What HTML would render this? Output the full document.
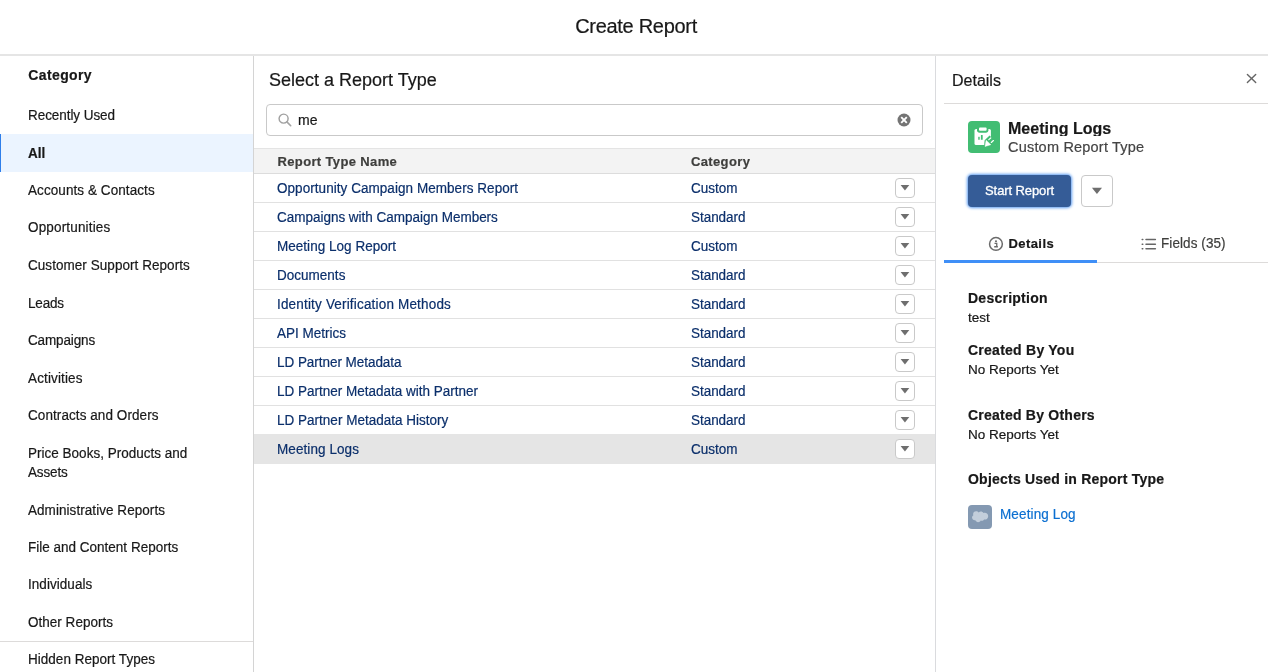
<!DOCTYPE html>
<html lang="en">
<head>
<meta charset="utf-8">
<title>Create Report</title>
<style>
*{box-sizing:border-box;margin:0;padding:0}
html,body{width:1268px;height:672px;overflow:hidden;background:#fff}
body{will-change:transform;-webkit-text-stroke:.2px;font-family:"Liberation Sans",Arial,sans-serif;font-size:13px;color:#181818;position:relative}
.abs{position:absolute}
.t{position:absolute;white-space:nowrap;line-height:1}
#hdr{left:0;top:0;width:1268px;height:56px;border-bottom:2px solid #e5e5e5;background:#fff}
#left{left:0;top:56px;width:254px;height:616px;border-right:1px solid #d4d4d4;background:#fff}
#center{left:254px;top:56px;width:682px;height:616px;border-right:1px solid #dadbde;background:#fff}
#right{left:936px;top:56px;width:332px;height:616px;background:#fff}
.nav{position:absolute;left:28.300px;white-space:nowrap;font-size:14px;line-height:20px;color:#181818;transform:scaleX(.9643);transform-origin:0 0}
#sel{left:0;top:134px;width:253px;height:38px;background:#ebf4ff;border-left:1px solid #2e7eea}
#hid{left:0;top:641px;width:253px;height:1px;background:#dddbda}
#search{left:266px;top:104px;width:657px;height:32px;border:1px solid #c9c9c9;border-radius:4px;background:#fff}
#thead{left:254px;top:148px;width:681px;height:26px;background:#f3f3f3;border-top:1px solid #e4e4e4;border-bottom:1px solid #dcdcdc}
.th{position:absolute;font-weight:bold;font-size:13px;color:#3e3e3c;line-height:1;white-space:nowrap}
.row{position:absolute;left:254px;width:681px;height:29px;border-bottom:1px solid #e1e1e1}
.row.sel{background:#e5e5e5;border-bottom:0;height:30px;margin-top:-1px;padding-top:1px}
.row .n{position:absolute;left:23.400px;top:7px;font-size:14px;line-height:1;color:#0b2f6b;white-space:nowrap;transform:scaleX(.9643);transform-origin:0 0}
.row .c{position:absolute;left:436.500px;top:7px;font-size:14px;line-height:1;color:#0b2f6b;white-space:nowrap;transform:scaleX(.9643);transform-origin:0 0}
.row .dd{position:absolute;left:641px;top:4px;width:20px;height:20px;border:1px solid #c9c9c9;border-radius:4px;background:#fff}
.row .dd svg{position:absolute;left:0;top:0}
.row.sel .n,.row.sel .c{top:8px}
.row.sel .dd{top:5px}
.h{font-size:14px;font-weight:bold;color:#181818}
.v{font-size:13.5px;color:#181818}
.sx{transform:scaleX(.9643);transform-origin:0 0}
</style>
</head>
<body>
<div id="hdr" class="abs"></div>
<div class="t" style="left:575.200px;top:16px;font-size:20px;letter-spacing:-0.3px;color:#181818">Create Report</div>

<div id="left" class="abs"></div>
<div id="center" class="abs"></div>
<div id="right" class="abs"></div>

<!-- left nav -->
<div id="sel" class="abs"></div>
<div class="nav" style="top:65px;font-weight:bold;font-size:14px;letter-spacing:.38px;transform:none">Category</div>
<div class="nav" style="top:105px;letter-spacing:-0.067px;">Recently Used</div>
<div class="nav" style="top:143px;font-weight:bold;">All</div>
<div class="nav" style="top:180px;letter-spacing:0.078px;">Accounts &amp; Contacts</div>
<div class="nav" style="top:217px;letter-spacing:0.167px;">Opportunities</div>
<div class="nav" style="top:255px;letter-spacing:0.052px;">Customer Support Reports</div>
<div class="nav" style="top:293px;letter-spacing:-0.200px;">Leads</div>
<div class="nav" style="top:330px;letter-spacing:-0.150px;">Campaigns</div>
<div class="nav" style="top:368px;letter-spacing:0.144px;">Activities</div>
<div class="nav" style="top:405px;letter-spacing:0.079px;">Contracts and Orders</div>
<div class="nav" style="top:443px;letter-spacing:0.012px;">Price Books, Products and</div>
<div class="nav" style="top:462px;letter-spacing:-0.140px;">Assets</div>
<div class="nav" style="top:500px;letter-spacing:0.057px;">Administrative Reports</div>
<div class="nav" style="top:537px;letter-spacing:0.004px;">File and Content Reports</div>
<div class="nav" style="top:574px;letter-spacing:0.050px;">Individuals</div>
<div class="nav" style="top:612px;letter-spacing:0.017px;">Other Reports</div>
<div class="nav" style="top:649px;letter-spacing:0.022px;">Hidden Report Types</div>
<div id="hid" class="abs"></div>

<!-- center -->
<div class="t" style="left:269px;top:71px;font-size:18px;color:#181818">Select a Report Type</div>
<div id="search" class="abs"></div>
<svg class="abs" style="left:277px;top:113px" width="16" height="16" viewBox="0 0 16 16"><circle cx="6.600" cy="5.600" r="4.500" fill="none" stroke="#a0a0a0" stroke-width="1.450"/><path d="M9.900 8.900L13.700 12.700" stroke="#a3a3a3" stroke-width="1.600" stroke-linecap="round"/></svg>
<div class="t" style="left:298px;top:113px;font-size:14px;color:#181818">me</div>
<svg class="abs" style="left:897px;top:113px" width="14" height="14" viewBox="0 0 14 14"><circle cx="7" cy="7" r="6.500" fill="#747474"/><path d="M4.200 4.200L9.800 9.800M9.800 4.200L4.200 9.800" stroke="#fff" stroke-width="1.900"/></svg>

<div id="thead" class="abs"></div>
<div class="th" style="left:277.500px;top:155px;letter-spacing:.36px">Report Type Name</div>
<div class="th" style="left:691px;top:155px;letter-spacing:.36px">Category</div>

<div class="row" style="top:174px"><span class="n" style="letter-spacing:0.053px;">Opportunity Campaign Members Report</span><span class="c" style="">Custom</span><span class="dd"><svg width="18" height="18" viewBox="0 0 18 18"><path d="M4.600 5.900h8.700l-4.350 5.600z" fill="#6e6e6e"/></svg></span></div>
<div class="row" style="top:203px"><span class="n" style="letter-spacing:-0.017px;">Campaigns with Campaign Members</span><span class="c" style="letter-spacing:-0.043px;">Standard</span><span class="dd"><svg width="18" height="18" viewBox="0 0 18 18"><path d="M4.600 5.900h8.700l-4.350 5.600z" fill="#6e6e6e"/></svg></span></div>
<div class="row" style="top:232px"><span class="n" style="letter-spacing:0.029px;">Meeting Log Report</span><span class="c" style="">Custom</span><span class="dd"><svg width="18" height="18" viewBox="0 0 18 18"><path d="M4.600 5.900h8.700l-4.350 5.600z" fill="#6e6e6e"/></svg></span></div>
<div class="row" style="top:261px"><span class="n" style="letter-spacing:0.013px;">Documents</span><span class="c" style="letter-spacing:-0.043px;">Standard</span><span class="dd"><svg width="18" height="18" viewBox="0 0 18 18"><path d="M4.600 5.900h8.700l-4.350 5.600z" fill="#6e6e6e"/></svg></span></div>
<div class="row" style="top:290px"><span class="n" style="letter-spacing:0.186px;">Identity Verification Methods</span><span class="c" style="letter-spacing:-0.043px;">Standard</span><span class="dd"><svg width="18" height="18" viewBox="0 0 18 18"><path d="M4.600 5.900h8.700l-4.350 5.600z" fill="#6e6e6e"/></svg></span></div>
<div class="row" style="top:319px"><span class="n" style="letter-spacing:0.010px;">API Metrics</span><span class="c" style="letter-spacing:-0.043px;">Standard</span><span class="dd"><svg width="18" height="18" viewBox="0 0 18 18"><path d="M4.600 5.900h8.700l-4.350 5.600z" fill="#6e6e6e"/></svg></span></div>
<div class="row" style="top:348px"><span class="n" style="letter-spacing:-0.044px;">LD Partner Metadata</span><span class="c" style="letter-spacing:-0.043px;">Standard</span><span class="dd"><svg width="18" height="18" viewBox="0 0 18 18"><path d="M4.600 5.900h8.700l-4.350 5.600z" fill="#6e6e6e"/></svg></span></div>
<div class="row" style="top:377px"><span class="n" style="">LD Partner Metadata with Partner</span><span class="c" style="letter-spacing:-0.043px;">Standard</span><span class="dd"><svg width="18" height="18" viewBox="0 0 18 18"><path d="M4.600 5.900h8.700l-4.350 5.600z" fill="#6e6e6e"/></svg></span></div>
<div class="row" style="top:406px"><span class="n" style="letter-spacing:0.012px;">LD Partner Metadata History</span><span class="c" style="letter-spacing:-0.043px;">Standard</span><span class="dd"><svg width="18" height="18" viewBox="0 0 18 18"><path d="M4.600 5.900h8.700l-4.350 5.600z" fill="#6e6e6e"/></svg></span></div>
<div class="row sel" style="top:435px"><span class="n" style="letter-spacing:0.082px;">Meeting Logs</span><span class="c" style="">Custom</span><span class="dd"><svg width="18" height="18" viewBox="0 0 18 18"><path d="M4.600 5.900h8.700l-4.350 5.600z" fill="#6e6e6e"/></svg></span></div>
<!-- right -->
<div class="t" style="left:952px;top:73px;font-size:16px;color:#181818">Details</div>
<svg class="abs" style="left:1245px;top:71.500px" width="13" height="13" viewBox="0 0 13 13"><path d="M2.400 2.400L10.700 10.600M10.700 2.400L2.400 10.600" stroke="#666" stroke-width="1.400" stroke-linecap="round"/></svg>
<div class="abs" style="left:944px;top:103px;width:324px;height:1px;background:#dddbda"></div>

<div class="abs" style="left:968px;top:121px;width:32px;height:32px;border-radius:4px;background:#42bd73"></div>
<svg class="abs" style="left:968px;top:121px" width="32" height="32" viewBox="0 0 32 32">
<rect x="6.500" y="7.900" width="16.400" height="16.100" rx="1.600" fill="#fff"/>
<path d="M9 7h11.400v2.200c0 1.400-1.100 2.500-2.500 2.500h-6.400c-1.400 0-2.500-1.100-2.500-2.500z" fill="#42bd73"/>
<rect x="11" y="6.500" width="7.600" height="3.200" rx="1" fill="#fff"/>
<rect x="10.250" y="15.800" width="1.450" height="3" rx=".3" fill="#42bd73"/>
<rect x="12.900" y="14" width="1.800" height="4.800" rx=".3" fill="#42bd73"/>
<path d="M16 26.500l.6-7.300 5-4.600 5.600 5.600-4 4.600z" fill="#42bd73"/>
<path d="M18.100 19.200l4.800 4.500-5.900 1.800z" fill="#fff" stroke="#fff" stroke-width=".4" stroke-linejoin="round"/>
<path d="M20.800 18.600l1.950-1.650M23.300 21.500l2.100-2" stroke="#fff" stroke-width="1.150" stroke-linecap="round"/>
</svg>
<div class="t" style="left:1008px;top:120px;font-size:16px;font-weight:bold;color:#181818;height:16px;overflow:hidden;line-height:17px">Meeting Logs</div>
<div class="t" style="left:1008px;top:140px;font-size:14.500px;letter-spacing:.2px;color:#444">Custom Report Type</div>

<div class="abs" style="left:968px;top:175px;width:103px;height:32px;border-radius:4px;background:#355c97;box-shadow:0 0 3px 1px #5b9bf0"></div>
<div class="t" style="left:968px;width:103px;text-align:center;top:184px;font-size:13px;letter-spacing:-.1px;-webkit-text-stroke:.3px;color:#fff">Start Report</div>
<div class="abs" style="left:1081px;top:175px;width:32px;height:32px;border-radius:4px;border:1px solid #c9c9c9;background:#fff"></div>
<svg class="abs" style="left:1081px;top:175px" width="32" height="32" viewBox="0 0 32 32"><path d="M10.900 12.800h10.100l-5.050 6.300z" fill="#6e6e6e"/></svg>

<svg class="abs" style="left:988px;top:236px" width="16" height="16" viewBox="0 0 16 16"><circle cx="7.950" cy="7.950" r="6.400" fill="none" stroke="#6b6b6b" stroke-width="1.500"/><circle cx="8" cy="5.300" r="1.050" fill="#6b6b6b"/><path d="M6.500 7.400h2.250v3.400M6.200 10.750h3.700" stroke="#6b6b6b" stroke-width="1.300" fill="none"/></svg>
<div class="t" style="left:1008.500px;top:237px;font-size:13px;font-weight:bold;letter-spacing:.42px;color:#181818">Details</div>
<svg class="abs" style="left:1141px;top:237px" width="16" height="14" viewBox="0 0 16 14"><path d="M1.200 2.500h.6M1.200 7.200h.6M1.200 11.800h.6M5 2.500h9.400M5 7.200h9.400M5 11.800h9.400" stroke="#666" stroke-width="1.500" stroke-linecap="round"/></svg>
<div class="t sx" style="left:1161px;top:236px;font-size:14px;letter-spacing:.08px;color:#3e3e3c">Fields (35)</div>
<div class="abs" style="left:944px;top:262px;width:324px;height:1px;background:#dddbda"></div>
<div class="abs" style="left:944px;top:260px;width:153px;height:3px;background:#3f8ff7"></div>

<div class="t h" style="left:968px;top:291px;letter-spacing:.25px">Description</div>
<div class="t v" style="left:968px;top:311px">test</div>
<div class="t h" style="left:968px;top:343px;letter-spacing:.25px">Created By You</div>
<div class="t v" style="left:968px;top:363px">No Reports Yet</div>
<div class="t h" style="left:968px;top:408px;letter-spacing:.23px">Created By Others</div>
<div class="t v" style="left:968px;top:428px">No Reports Yet</div>
<div class="t h" style="left:968px;top:472px;letter-spacing:.22px">Objects Used in Report Type</div>

<div class="abs" style="left:968px;top:505px;width:24px;height:24px;border-radius:4px;background:#8499b2"></div>
<svg class="abs" style="left:968px;top:505px" width="24" height="24" viewBox="0 0 24 24"><path d="M10.400 8.700c.6-.6 1.300-.9 2.200-.9 1.100 0 2.100.6 2.600 1.500.4-.2.900-.3 1.400-.3 2 0 3.500 1.600 3.500 3.500s-1.600 3.500-3.500 3.500c-.2 0-.5 0-.7-.1-.4.800-1.300 1.300-2.300 1.300-.4 0-.8-.1-1.100-.3-.5 1-1.500 1.700-2.700 1.700-1.300 0-2.300-.8-2.800-1.900-.2 0-.4.100-.6.100-1.500 0-2.800-1.200-2.800-2.800 0-1 .5-1.900 1.400-2.400-.2-.4-.3-.8-.3-1.300C4.700 8.800 6 7.500 7.700 7.500c1.100 0 2.100.5 2.700 1.200z" fill="#c3cedb" transform="translate(0.500 -1.100) scale(.98)"/></svg>
<div class="t sx" style="left:1000px;top:507px;font-size:14px;letter-spacing:.13px;color:#0b6fd1">Meeting Log</div>
</body>
</html>
